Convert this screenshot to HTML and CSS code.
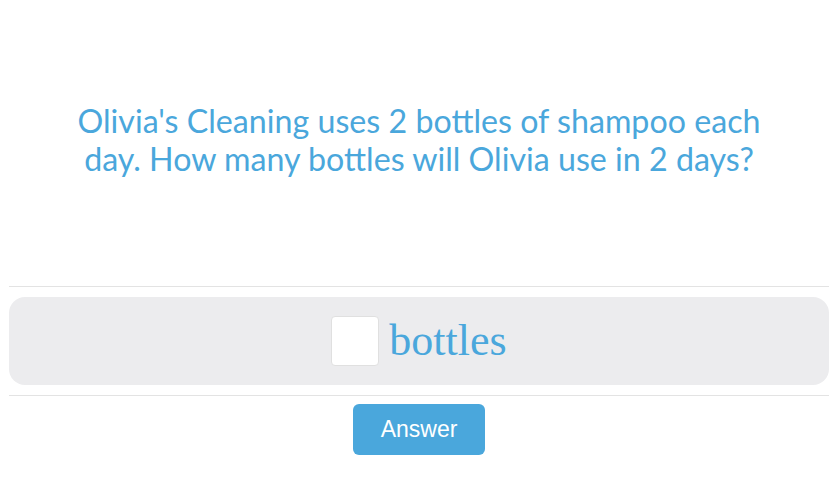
FILE: index.html
```html
<!DOCTYPE html>
<html lang="en">
<head>
    <meta charset="UTF-8">
    <meta name="viewport" content="width=device-width, initial-scale=1.0">
    <title>Word Problem</title>
    <link rel="stylesheet" href="styles.css">
</head>
<body>
    <div class="page">
        <div class="question">
            <p>Olivia's Cleaning uses 2 bottles of shampoo each day. How many bottles will Olivia use in 2 days?</p>
        </div>
        <div class="answer-area">
            <input type="text" class="answer-input" aria-label="answer">
            <span class="unit">bottles</span>
        </div>
        <div class="actions">
            <button type="button" class="answer-btn">Answer</button>
        </div>
    </div>
</body>
</html>
```

FILE: styles.css
```css
body {
    margin: 0;
    background-color: #ffffff;
}
.page {
    padding: 0 11px 0 9px;
}
.question {
    height: 286px;
    border-bottom: 1px solid #e3e3e3;
    display: flex;
    align-items: center;
    justify-content: center;
}
.question p {
    margin: 0 0 6px;
    max-width: 710px;
    text-align: center;
    font-family: 'Lato', sans-serif;
    font-size: 32.2px;
    line-height: 38px;
    color: #4aa7dc;
}
.answer-area {
    margin: 10px 0;
    height: 88px;
    background-color: #ececee;
    border-radius: 16px;
    display: flex;
    align-items: center;
    justify-content: center;
    gap: 10px;
}
.answer-input {
    width: 48px;
    height: 50px;
    box-sizing: border-box;
    border: 1px solid #e0e0e0;
    border-radius: 4px;
    background-color: #ffffff;
}
.unit {
    font-family: 'Liberation Serif', serif;
    font-size: 44px;
    line-height: 50px;
    color: #4aa7dc;
}
.actions {
    border-top: 1px solid #e3e3e3;
    padding-top: 8px;
    display: flex;
    justify-content: center;
}
.answer-btn {
    width: 132px;
    height: 51px;
    border: none;
    border-radius: 6px;
    background-color: #4aa7dc;
    color: #ffffff;
    font-family: 'Liberation Sans', Arial, sans-serif;
    font-size: 23px;
    cursor: pointer;
}
```
